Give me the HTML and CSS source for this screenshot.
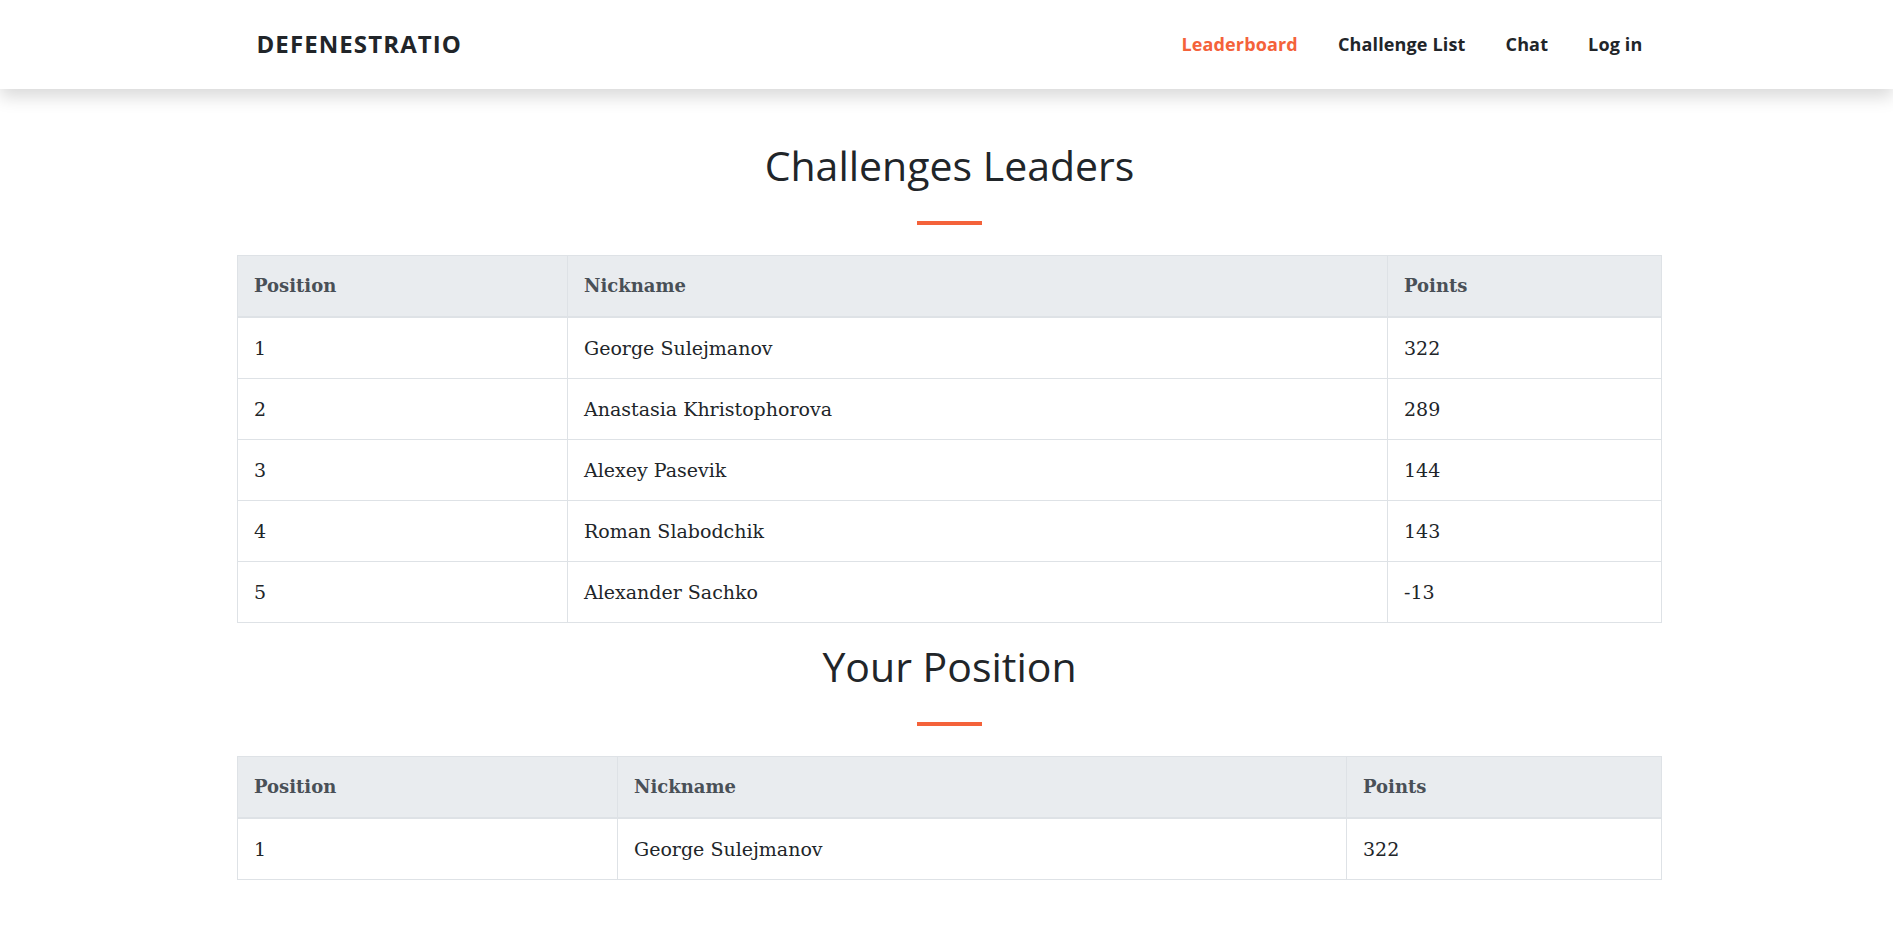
FILE: index.html
```html
<!DOCTYPE html>
<html lang="en">
<head>
<meta charset="utf-8">
<title>Leaderboard - Defenestratio</title>
<link rel="stylesheet" href="styles.css">
</head>
<body>
<nav class="navbar">
  <div class="nav-inner">
    <a class="brand" href="#">DEFENESTRATIO</a>
    <ul class="nav-links">
      <li><a class="active" href="#">Leaderboard</a></li>
      <li><a href="#">Challenge List</a></li>
      <li><a href="#">Chat</a></li>
      <li><a href="#">Log in</a></li>
    </ul>
  </div>
</nav>
<main class="page">
  <section class="block block-first">
    <h2 class="title">Challenges Leaders</h2>
    <hr class="divider">
    <table class="board board-leaders">
      <thead>
        <tr><th class="c1">Position</th><th class="c2">Nickname</th><th class="c3">Points</th></tr>
      </thead>
      <tbody>
        <tr><td>1</td><td>George Sulejmanov</td><td>322</td></tr>
        <tr><td>2</td><td>Anastasia Khristophorova</td><td>289</td></tr>
        <tr><td>3</td><td>Alexey Pasevik</td><td>144</td></tr>
        <tr><td>4</td><td>Roman Slabodchik</td><td>143</td></tr>
        <tr><td>5</td><td>Alexander Sachko</td><td>-13</td></tr>
      </tbody>
    </table>
  </section>
  <section class="block block-second">
    <h2 class="title">Your Position</h2>
    <hr class="divider">
    <table class="board board-mine">
      <thead>
        <tr><th class="c1">Position</th><th class="c2">Nickname</th><th class="c3">Points</th></tr>
      </thead>
      <tbody>
        <tr><td>1</td><td>George Sulejmanov</td><td>322</td></tr>
      </tbody>
    </table>
  </section>
</main>
</body>
</html>
```

FILE: styles.css
```css
* { box-sizing: border-box; }

html, body {
  margin: 0;
  padding: 0;
  background: #fff;
}

body {
  font-family: "DejaVu Serif", "Liberation Serif", serif;
  color: #212529;
}

.navbar {
  height: 89px;
  padding-bottom: 2px;
  background: #fff;
  box-shadow: 0 8px 16px rgba(0, 0, 0, 0.15);
  position: relative;
  z-index: 2;
}

.nav-inner {
  width: 1426px;
  margin: 0 auto;
  padding: 0 20px;
  height: 100%;
  display: flex;
  align-items: center;
  justify-content: space-between;
  transform: translateX(3px);
}

.brand {
  font-family: "Open Sans", "Liberation Sans", sans-serif;
  font-weight: 700;
  font-size: 24px;
  letter-spacing: 1.1px;
  color: #212529;
  text-decoration: none;
}

.nav-links {
  list-style: none;
  margin: 0;
  padding: 0;
  display: flex;
  gap: 40px;
}

.nav-links a {
  font-family: "Open Sans", "Liberation Sans", sans-serif;
  font-weight: 700;
  font-size: 18px;
  letter-spacing: 0.15px;
  color: #212529;
  text-decoration: none;
}

.nav-links a.active {
  color: #f4623a;
}

.page {
  width: 1425px;
  margin: 0 auto;
  transform: translateX(3px);
}

.block-first { padding-top: 54px; }
.block-second { padding-top: 21px; }

.title {
  margin: 0;
  padding-bottom: 4px;
  text-align: center;
  font-family: "Open Sans", "Liberation Sans", sans-serif;
  font-weight: 400;
  font-size: 41px;
  line-height: 44px;
  color: #212529;
}

.divider {
  width: 65px;
  height: 4px;
  margin: 30px auto;
  border: 0;
  background: #f4623a;
}

.board {
  width: 100%;
  border-collapse: collapse;
  font-size: 19px;
}

.board th,
.board td {
  border: 1px solid #dee2e6;
  padding: 18px 16px;
  line-height: 24px;
  text-align: left;
  vertical-align: middle;
}

.board th {
  background: #e9ecef;
  color: #495057;
  font-weight: 700;
  font-size: 18px;
  border-bottom-width: 2px;
}

.board-leaders .c1 { width: 330px; }
.board-leaders .c2 { width: 820px; }
.board-mine .c1 { width: 380px; }
.board-mine .c2 { width: 729px; }
```
